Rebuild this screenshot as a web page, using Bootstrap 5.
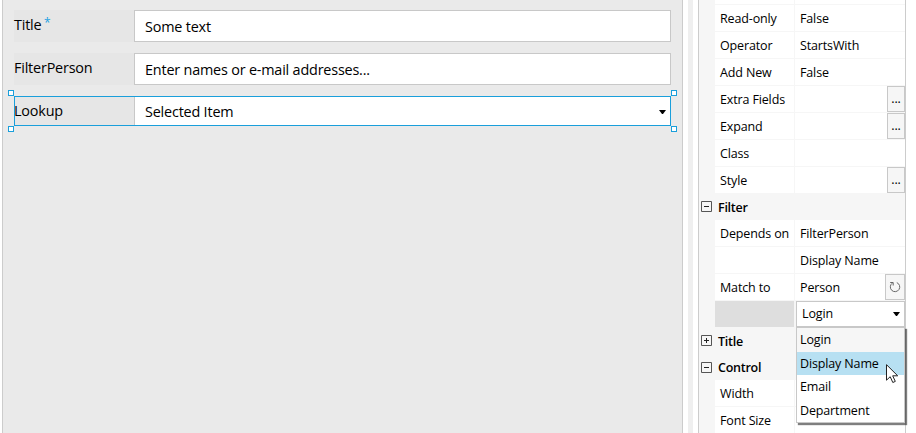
<!DOCTYPE html>
<html lang="en">
<head>
<meta charset="utf-8">
<title>Form designer</title>
<link href="https://cdn.jsdelivr.net/npm/bootstrap@5.3.0/dist/css/bootstrap.min.css" rel="stylesheet">
<style>
body{width:916px;height:433px;background:#fff;color:#000;font-family:"Open Sans","Noto Sans",sans-serif;font-size:12.5px;letter-spacing:-.14px;line-height:18px}
.designer{width:681px;margin-left:2px;background:#eaeaea;border:solid #ccc;border-width:0 1px;padding:10px 11px;font-size:14.4px;letter-spacing:-.19px;gap:11px}
.field{height:32px}
.field-label{width:120px;background:#e6e6e6;padding-top:6px}
.field-label sup{color:#1ba1e2;font-size:12px;top:-3px;left:-1px;line-height:0}
.field-input{background:#fff;border:1px solid #c8c8c8;padding-left:10px;padding-top:1px}
.picked{height:30px;outline:1px solid #1a9fdb;outline-offset:-1px}
.picked .field-label{padding-top:6px}
.picked .field-input{border-width:0 0 0 1px;padding-right:5px}
.grip{width:6px;height:6px;border:1px solid #1a9fdb;background:#fff}
.grip-tl{left:-6px;top:-6px}.grip-tr{right:-6px;top:-6px}
.grip-bl{left:-6px;bottom:-6px}.grip-br{right:-6px;bottom:-6px}
.splitter{width:5px;margin:0 5px;background:#efefef}
.props{width:208px;border:solid #ccc;border-width:0 1px;background:#f6f6f6}
.prop{height:27px;flex:none;padding-left:16px;padding-bottom:1px}
.prop-first{height:5px}
.prop-last{height:26px}
.prop-key{width:79px;margin-right:1px;padding-left:5px;padding-top:2px;background:#fff}
.prop-val{background:#fff;padding-left:5px}
.prop-text{padding-top:2px}
.blank-key{background:#dedede}
.group-head{height:27px;flex:none;padding-left:2px;gap:6px;font-weight:600;letter-spacing:-.26px}
.group-head span{padding-top:2px}
.group-short{height:26px}
.mini-btn{width:18px;height:26px;border:1px solid #c8c8c8;background:#f6f6f6;padding-top:3px;flex:none}
.mini-wide{width:20px;padding:0}
.combo{border:1px solid #c8c8c8;margin-left:1px;background:#fff;padding:0 4px 1px 5px;width:109px}
.choices{left:-1px;top:25px;width:109px;height:96px;border:1px solid #c8c8c8;background:#fff;box-shadow:2px 2px 1px rgba(0,0,0,.5);z-index:3}
.choice{height:23.5px;padding-left:3px;padding-top:1px}
.choice-top{background:#f6f6f6}
.choice-on{background:#b7e0f2}
.cursor{left:89px;top:62px;z-index:4}
svg{display:block;flex:none}
</style>
<script src="https://cdn.jsdelivr.net/npm/bootstrap@5.3.0/dist/js/bootstrap.bundle.min.js"></script>
</head>
<body class="d-flex overflow-hidden">
<main class="designer d-flex flex-column flex-shrink-0">
  <div class="field d-flex"><label class="field-label">Title <sup>*</sup></label><div class="field-input flex-grow-1 d-flex align-items-center">Some text</div></div>
  <div class="field d-flex"><label class="field-label">FilterPerson</label><div class="field-input flex-grow-1 d-flex align-items-center">Enter names or e-mail addresses...</div></div>
  <div class="field picked d-flex position-relative"><label class="field-label">Lookup</label><div class="field-input flex-grow-1 d-flex align-items-center justify-content-between"><span>Selected Item</span><svg width="7" height="4"><path d="M0 0h7L4 4H3z"/></svg></div>
    <i class="grip grip-tl position-absolute"></i><i class="grip grip-tr position-absolute"></i><i class="grip grip-bl position-absolute"></i><i class="grip grip-br position-absolute"></i></div>
</main>
<div class="splitter flex-shrink-0"></div>
<aside class="props d-flex flex-column flex-shrink-0">
  <div class="prop prop-first d-flex"><div class="prop-key"></div><div class="prop-val flex-grow-1"></div></div>
  <div class="prop d-flex"><div class="prop-key d-flex align-items-center">Read-only</div><div class="prop-val prop-text flex-grow-1 d-flex align-items-center">False</div></div>
  <div class="prop d-flex"><div class="prop-key d-flex align-items-center">Operator</div><div class="prop-val prop-text flex-grow-1 d-flex align-items-center">StartsWith</div></div>
  <div class="prop d-flex"><div class="prop-key d-flex align-items-center">Add New</div><div class="prop-val prop-text flex-grow-1 d-flex align-items-center">False</div></div>
  <div class="prop d-flex"><div class="prop-key d-flex align-items-center">Extra Fields</div><div class="prop-val flex-grow-1 d-flex justify-content-end"><span class="mini-btn text-center">...</span></div></div>
  <div class="prop d-flex"><div class="prop-key d-flex align-items-center">Expand</div><div class="prop-val flex-grow-1 d-flex justify-content-end"><span class="mini-btn text-center">...</span></div></div>
  <div class="prop d-flex"><div class="prop-key d-flex align-items-center">Class</div><div class="prop-val flex-grow-1"></div></div>
  <div class="prop prop-last pb-0 d-flex"><div class="prop-key d-flex align-items-center">Style</div><div class="prop-val flex-grow-1 d-flex justify-content-end"><span class="mini-btn text-center">...</span></div></div>
  <div class="group-head d-flex align-items-center"><svg width="11" height="11" fill="none" stroke="#555"><path d="M.5.5h10v10H.5z"/><path stroke="#222" d="M3 5.5h5"/></svg><span>Filter</span></div>
  <div class="prop d-flex"><div class="prop-key d-flex align-items-center text-nowrap">Depends on</div><div class="prop-val prop-text flex-grow-1 d-flex align-items-center">FilterPerson</div></div>
  <div class="prop d-flex"><div class="prop-key"></div><div class="prop-val prop-text flex-grow-1 d-flex align-items-center">Display Name</div></div>
  <div class="prop d-flex"><div class="prop-key d-flex align-items-center">Match to</div><div class="prop-val flex-grow-1 d-flex align-items-center justify-content-between"><span class="prop-text">Person</span><span class="mini-btn mini-wide d-flex align-items-center justify-content-center"><svg width="12" height="12" fill="none" stroke="#666"><path d="M7.8 1.6A4.7 4.7 0 1 1 3.2 2.2M1.2 1.5h3v3"/></svg></span></div></div>
  <div class="prop prop-last pb-0 d-flex"><div class="prop-key blank-key"></div>
    <div class="combo d-flex align-items-center justify-content-between position-relative"><span>Login</span><svg width="7" height="4"><path d="M0 0h7L4 4H3z"/></svg>
      <div class="choices position-absolute"><div class="choice choice-top d-flex align-items-center">Login</div><div class="choice choice-on d-flex align-items-center">Display Name</div><div class="choice d-flex align-items-center">Email</div><div class="choice d-flex align-items-center">Department</div></div>
      <svg class="cursor position-absolute" width="13" height="20" fill="#fff" stroke="#222"><path d="M.5.7v15.5l3.7-3.5 2.6 5.8 2.5-1.1-2.6-5.6h5z"/></svg>
    </div></div>
  <div class="group-head d-flex align-items-center"><svg width="11" height="11" fill="none" stroke="#555"><path d="M.5.5h10v10H.5z"/><path stroke="#222" d="M3 5.5h5M5.5 3v5"/></svg><span>Title</span></div>
  <div class="group-head group-short d-flex align-items-center"><svg width="11" height="11" fill="none" stroke="#555"><path d="M.5.5h10v10H.5z"/><path stroke="#222" d="M3 5.5h5"/></svg><span>Control</span></div>
  <div class="prop d-flex"><div class="prop-key d-flex align-items-center">Width</div><div class="prop-val flex-grow-1"></div></div>
  <div class="prop d-flex"><div class="prop-key d-flex align-items-center">Font Size</div><div class="prop-val flex-grow-1"></div></div>
</aside>
</body>
</html>
